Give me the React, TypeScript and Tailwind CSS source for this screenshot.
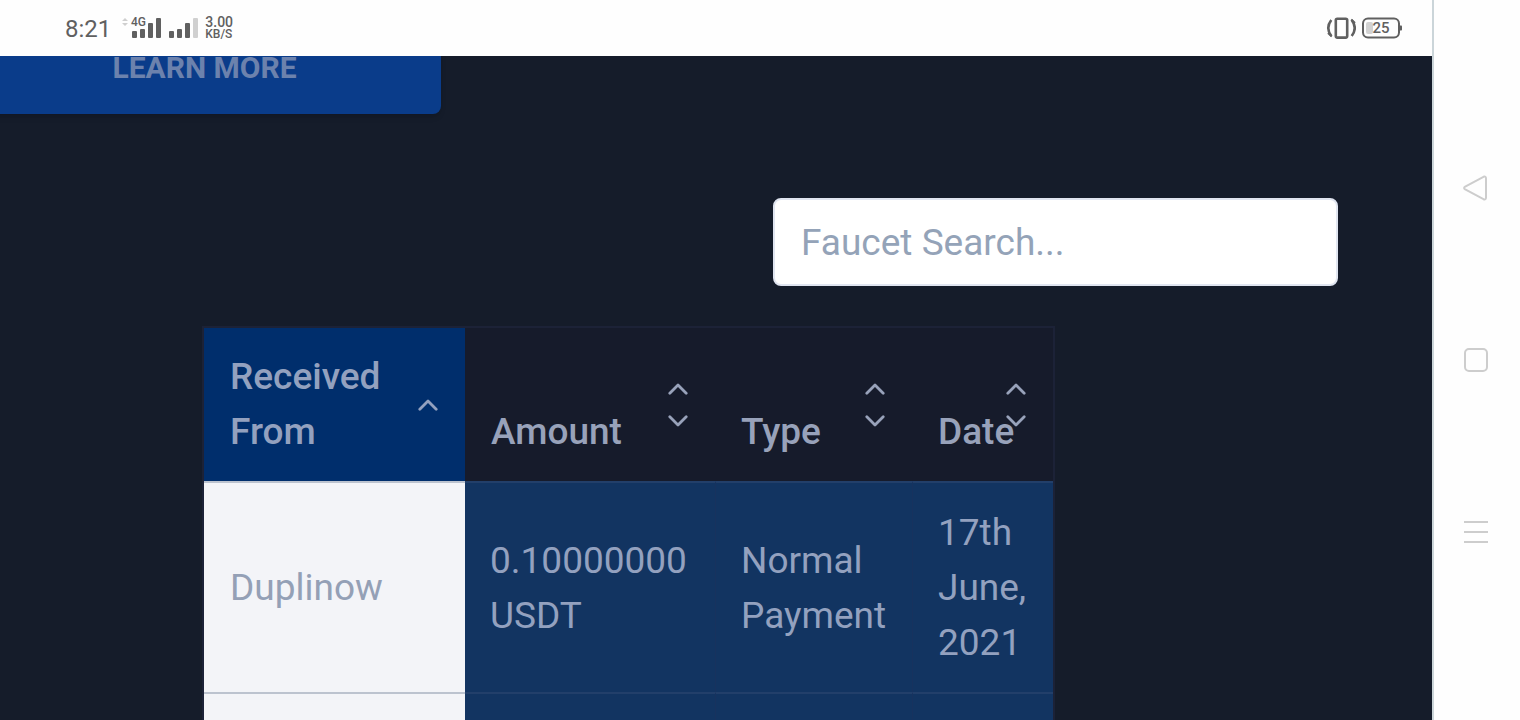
import type { ReactNode } from 'react'

type Sort = 'asc' | 'none'

const columns: { label: string; width: string; sort: Sort }[] = [
  { label: 'Received From', width: 'w-[261px]', sort: 'asc' },
  { label: 'Amount', width: 'w-[250px]', sort: 'none' },
  { label: 'Type', width: 'w-[197px]', sort: 'none' },
  { label: 'Date', width: 'w-[141px]', sort: 'none' },
]

const payments = [
  { from: 'Duplinow', amount: '0.10000000 USDT', type: 'Normal Payment', date: '17th June, 2021' },
  { from: '', amount: '', type: '', date: '' },
]

function Chevron({ down = false }: { down?: boolean }) {
  return (
    <svg width="20" height="12" viewBox="0 0 20 12" fill="none" stroke="currentColor" strokeWidth="2.8" strokeLinecap="round" strokeLinejoin="round">
      <path d={down ? 'M1.8 1.8L10 10L18.2 1.8' : 'M1.8 10.2L10 2L18.2 10.2'} />
    </svg>
  )
}

function StatusBar() {
  return (
    <header className="flex h-14 shrink-0 items-center justify-between bg-[#fefefe] pr-[30px] pl-[65px] text-[#606060]">
      <div className="flex items-center">
        <span className="pt-[2px] text-[24px] leading-7">8:21</span>
        <svg className="ml-[10px]" width="77" height="22" viewBox="121 17 77 22" fill="currentColor">
          <path d="M122 21l3-3 3 3zM122 23l3 3 3-3z" fill="#cfcfcf" />
          <text x="131" y="26" fontSize="12" fontWeight="500">4G</text>
          <rect x="132" y="31" width="5" height="7" rx="1" />
          <rect x="140" y="29" width="5" height="9" rx="1" />
          <rect x="148" y="23" width="5" height="15" rx="1" />
          <rect x="156" y="18" width="5" height="20" rx="1" />
          <rect x="169" y="31" width="5" height="7" rx="1" />
          <rect x="177" y="29" width="5" height="9" rx="1" />
          <rect x="185" y="23" width="5" height="15" rx="1" />
          <rect x="193" y="18" width="5" height="20" rx="1" fill="#d0d0d0" />
        </svg>
        <div className="ml-[7px] flex flex-col font-medium">
          <span className="text-[14px] leading-3">3.00</span>
          <span className="text-[12px] leading-3">KB/S</span>
        </div>
      </div>

      <div className="flex items-center gap-[6px]">
        <svg width="30" height="22" viewBox="0 0 30 22" fill="none" stroke="currentColor" strokeWidth="2.6">
          <rect x="9.8" y="1.8" width="11.4" height="18.8" rx="1.5" />
          <path d="M5.3 3C1.5 8 1.5 14 5.3 19M25.7 3C29.5 8 29.5 14 25.7 19" />
          <path d="M2 16l3.8 3.4M29 6l-3.8-3.4" strokeWidth="2" />
        </svg>
        <svg width="40" height="22" viewBox="0 0 40 22" fill="none">
          <rect x="1" y="1.5" width="36" height="19" rx="5" stroke="currentColor" strokeWidth="2" />
          <path d="M38 8.5h1.2q.8 0 .8 1v3q0 1-.8 1H38z" fill="currentColor" />
          <rect x="4" y="5" width="7" height="12" rx="2" fill="#d2d2d2" />
          <text x="19" y="16" fontSize="15" fontWeight="500" textAnchor="middle" fill="currentColor">25</text>
        </svg>
      </div>
    </header>
  )
}

function NavButton({ label, children }: { label: string; children: ReactNode }) {
  return (
    <button type="button" aria-label={label}>
      <svg width="26" height="26" viewBox="0 0 26 26" fill="none" stroke="#cdcdcd" strokeWidth="2" strokeLinejoin="round">
        {children}
      </svg>
    </button>
  )
}

function PaymentsTable() {
  return (
    <table className="ml-[202px] border-separate border-spacing-0 border-2 border-[#1c2237] text-left text-[37px] leading-[55px] text-[#93a1bf]">
      <thead>
        <tr>
          {columns.map(({ label, width, sort }) => (
            <th
              key={label}
              aria-sort={sort === 'asc' ? 'ascending' : 'none'}
              className={`relative px-[26px] pt-[21px] pb-[22px] align-bottom font-medium ${width} ${sort === 'asc' ? 'bg-[#002e6c]' : 'bg-[#161b2b] text-[#98a2ba]'}`}
            >
              <button type="button" className="block text-left">
                {label}
                <span className="absolute inset-y-0 right-[27px] flex flex-col items-center justify-center gap-5">
                  <Chevron />
                  {sort === 'none' && <Chevron down />}
                </span>
              </button>
            </th>
          ))}
        </tr>
      </thead>
      <tbody>
        {payments.map((payment, i) => (
          <tr key={i} className="h-[211px]">
            <td className="border-t-2 border-[#bcc3cf] bg-[#f3f4f8] px-[26px] text-[#94a0b6]">{payment.from}</td>
            <td className="border-t-2 border-[#223f6a] bg-[#123461] px-[25px]">{payment.amount}</td>
            <td className="border-t-2 border-l border-t-[#223f6a] border-l-[#17325e] bg-[#123461] px-[25px]">{payment.type}</td>
            <td className="border-t-2 border-l border-t-[#223f6a] border-l-[#17325e] bg-[#123461] px-[25px]">{payment.date}</td>
          </tr>
        ))}
      </tbody>
    </table>
  )
}

export default function App() {
  return (
    <div className="flex h-screen overflow-hidden bg-[#fefefe] font-['Roboto',sans-serif]">
      <div className="flex min-w-0 flex-1 flex-col">
        <StatusBar />

        {/* Page content, scrolled partway down */}
        <main className="min-h-0 flex-1 overflow-hidden bg-[#151c2a]">
          <button
            type="button"
            className="-mt-8 -ml-8 block h-[90px] w-[473px] rounded-lg bg-[#0a3c8a] pb-[2px] text-[30px] leading-7 font-bold text-[#6c82ad] shadow-md"
          >
            LEARN MORE
          </button>

          <div className="mt-[84px] flex justify-end pr-[94px]">
            <input
              type="search"
              aria-label="Faucet Search"
              placeholder="Faucet Search..."
              className="h-[88px] w-[565px] rounded-lg border-2 border-[#e0e5f0] bg-white px-[26px] text-[37px] text-[#64748b] placeholder:text-[#94a3b8]"
            />
          </div>

          <div className="mt-10">
            <PaymentsTable />
          </div>
        </main>
      </div>

      {/* System navigation */}
      <nav className="flex w-[88px] shrink-0 flex-col items-center justify-center gap-[146px] border-l-2 border-[#cbd5d9] pr-[2px]">
        <NavButton label="Back">
          <path d="M2.2 11.6L20.5 1.8Q23 .9 23 3.5V22.5Q23 25.1 20.5 24.2L2.2 14.4Q0 13 2.2 11.6Z" />
        </NavButton>
        <NavButton label="Home">
          <rect x="2" y="2" width="22" height="22" rx="4" />
        </NavButton>
        <NavButton label="Recent apps">
          <path d="M1 3H25M1 13H25M1 23H25" />
        </NavButton>
      </nav>
    </div>
  )
}
